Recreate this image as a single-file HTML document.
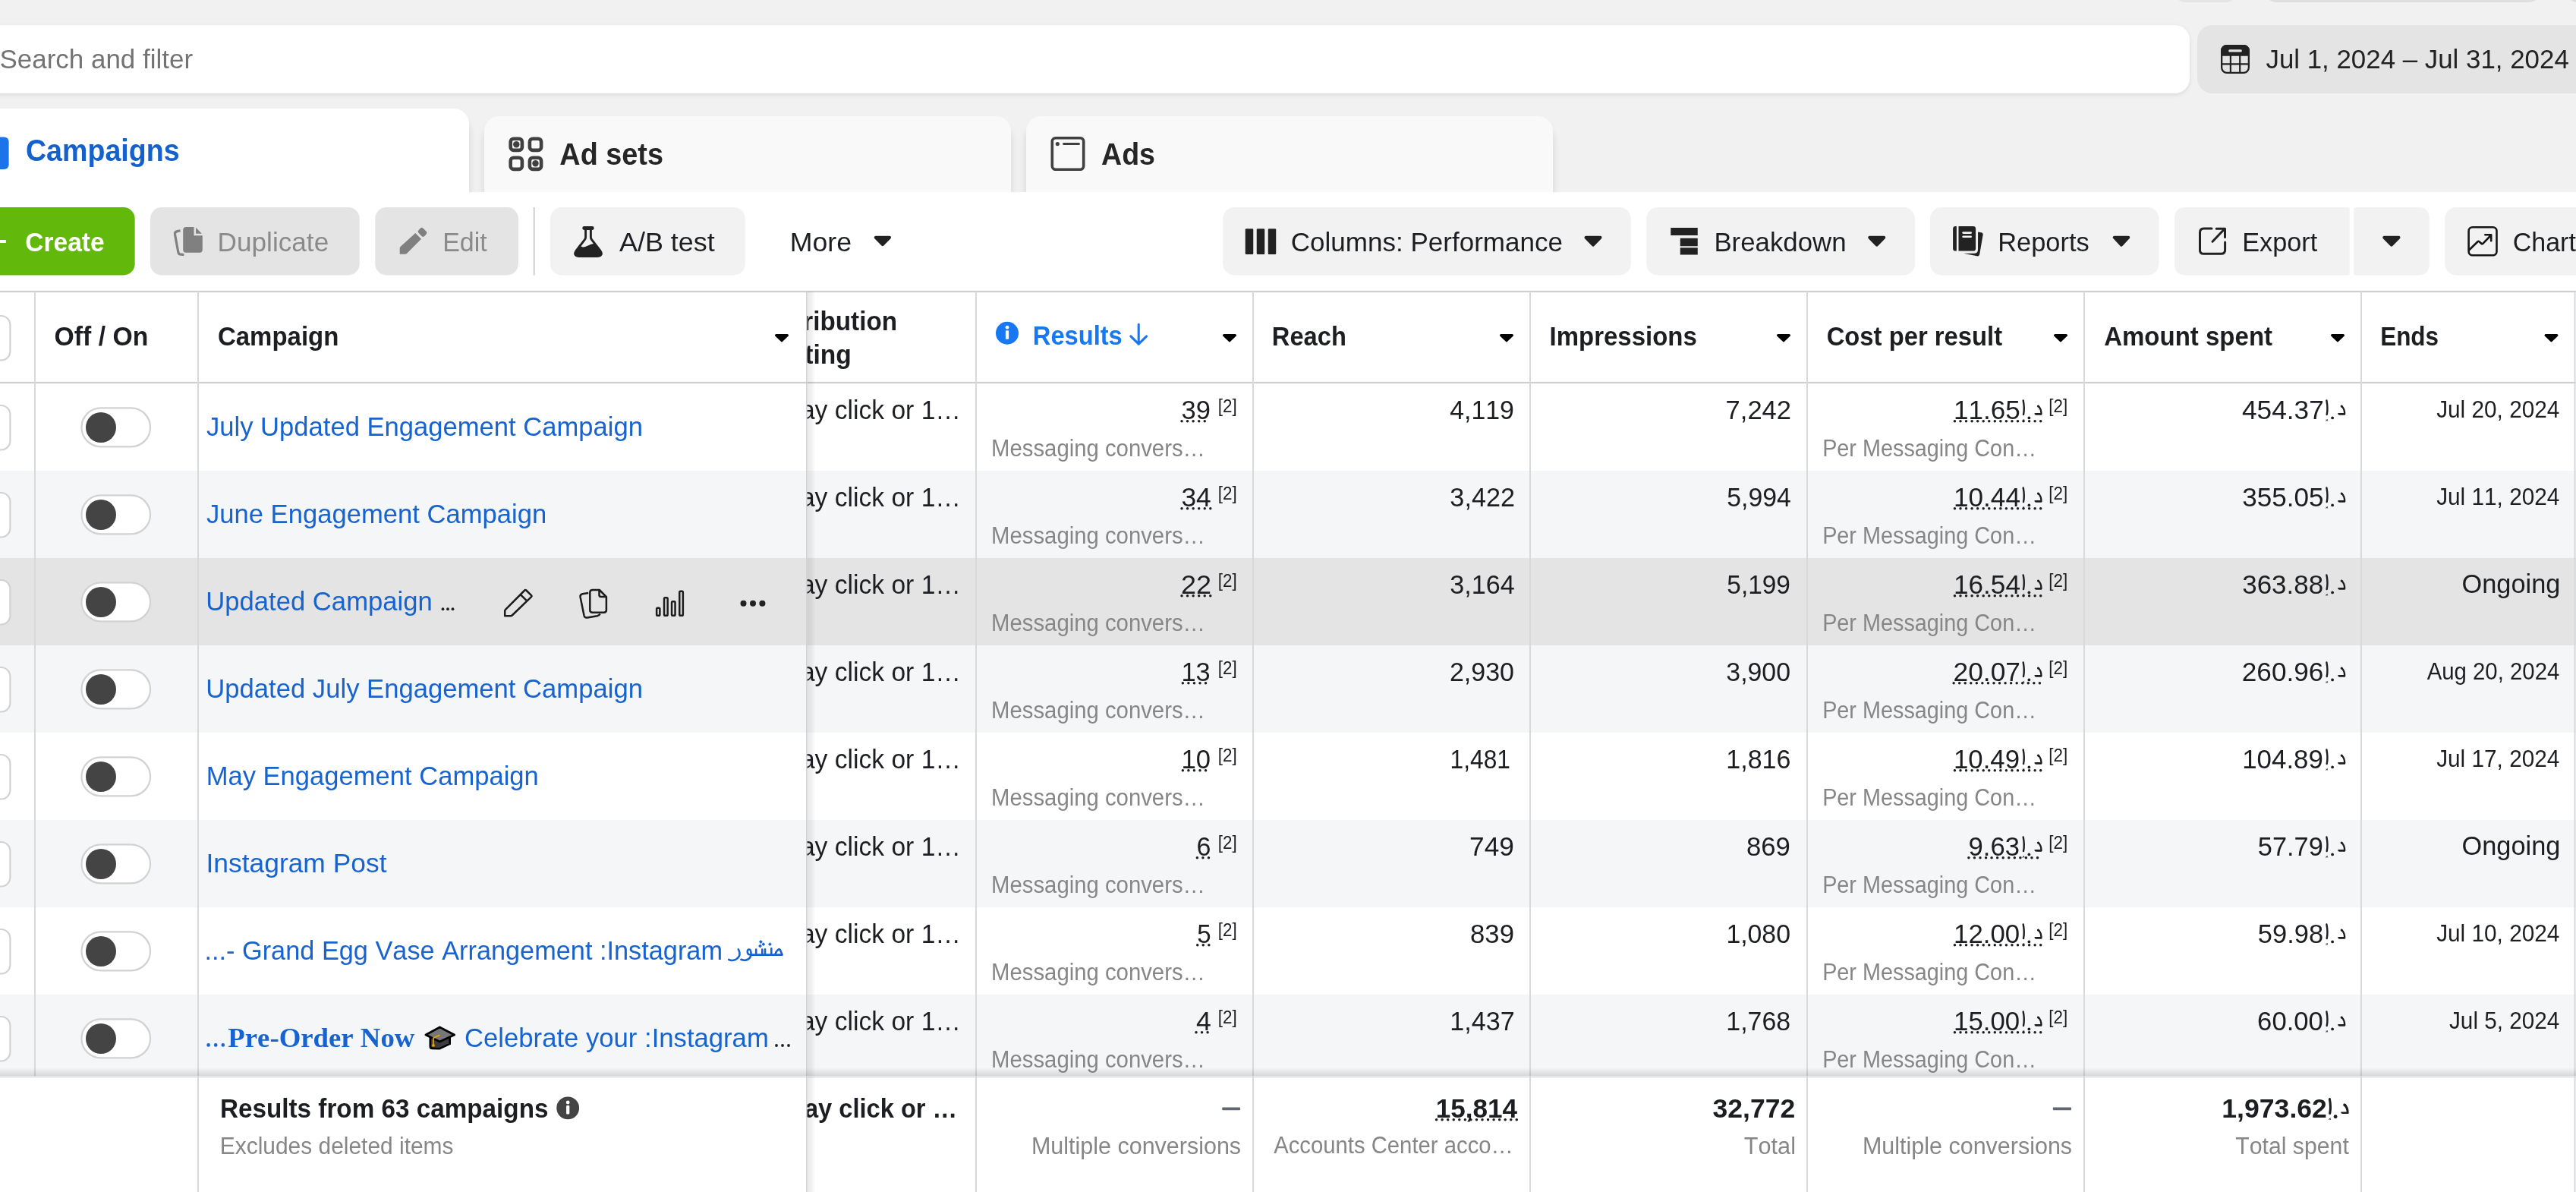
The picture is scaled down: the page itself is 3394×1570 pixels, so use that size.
<!DOCTYPE html>
<html><head><meta charset="utf-8"><title>Ads Manager</title>
<style>
html,body{margin:0;padding:0;background:#f1f1f1;overflow:hidden;}
svg{display:block;will-change:transform;}
text{font-kerning:none;white-space:pre;}
</style></head><body>
<svg width="3394" height="1570" viewBox="0 0 3394 1570">
<rect x="0.00" y="0.00" width="3394.00" height="1570.00" rx="0" fill="#f1f1f1" />
<rect x="2862.20" y="-40.00" width="87.40" height="43.00" rx="18" fill="#e4e4e4" />
<rect x="2982.20" y="-40.00" width="367.00" height="43.00" rx="18" fill="#dedede" />
<rect x="3379.00" y="-40.00" width="60.00" height="43.00" rx="18" fill="#dedede" />
<defs><filter id="sh1" x="-5%" y="-50%" width="110%" height="200%"><feDropShadow dx="0" dy="2" stdDeviation="2.5" flood-color="#000" flood-opacity="0.10"/></filter><filter id="sh2" x="-20%" y="-20%" width="140%" height="160%"><feDropShadow dx="0" dy="12" stdDeviation="5" flood-color="#000" flood-opacity="0.13"/></filter><linearGradient id="frz" x1="0" x2="1" y1="0" y2="0"><stop offset="0" stop-color="#000" stop-opacity="0.09"/><stop offset="0.6" stop-color="#000" stop-opacity="0.05"/><stop offset="1" stop-color="#000" stop-opacity="0"/></linearGradient><linearGradient id="fts" x1="0" x2="0" y1="0" y2="1"><stop offset="0" stop-color="#000" stop-opacity="0"/><stop offset="1" stop-color="#000" stop-opacity="0.13"/></linearGradient></defs>
<rect x="-30.00" y="33.00" width="2915.00" height="90.00" rx="20" fill="#ffffff" filter="url(#sh1)"/>
<text x="-0.59" y="90.00" font-family="Liberation Sans" font-size="35.70" font-weight="normal" fill="#737373" textLength="254.64" lengthAdjust="spacingAndGlyphs" >Search and filter</text>
<rect x="2895.00" y="33.00" width="560.00" height="90.00" rx="20" fill="#e4e4e4" />
<g transform="translate(2926.00,59.00)" >
<path d="M0 7.5 A7.5 7.5 0 0 1 7.5 0 H30.5 A7.5 7.5 0 0 1 38 7.5 V14.8 H0 Z" fill="#222"/>
<rect x="1.15" y="1.15" width="35.7" height="35.7" rx="6.8" fill="none" stroke="#222" stroke-width="2.3"/>
<rect x="10.2" y="6.3" width="17.7" height="3.2" rx="1.6" fill="#e4e4e4"/>
<path d="M12.9 14 V37 M25.2 14 V37 M0.5 25.4 H37.5" stroke="#222" stroke-width="2.2"/>
</g>
<text x="2985.46" y="90.40" font-family="Liberation Sans" font-size="35.70" font-weight="normal" fill="#222222" textLength="399.32" lengthAdjust="spacingAndGlyphs" >Jul 1, 2024 – Jul 31, 2024</text>
<rect x="-76.00" y="143.00" width="694.00" height="140.00" rx="20" fill="#ffffff" filter="url(#sh2)"/>
<rect x="638.00" y="153.00" width="694.00" height="130.00" rx="20" fill="#f9f9f9" filter="url(#sh2)"/>
<rect x="1352.00" y="153.00" width="694.00" height="130.00" rx="20" fill="#f9f9f9" filter="url(#sh2)"/>
<rect x="-33.00" y="180.40" width="44.60" height="42.50" rx="6" fill="#1b74e8" />
<text x="33.96" y="212.20" font-family="Liberation Sans" font-size="40.80" font-weight="bold" fill="#1461cc" textLength="202.59" lengthAdjust="spacingAndGlyphs" >Campaigns</text>
<g transform="translate(670.40,180.40)" >
<g fill="none" stroke="#404040" stroke-width="4.6"><rect x="2.3" y="2.3" width="15.2" height="15.2" rx="4"/><rect x="27.5" y="2.3" width="15.2" height="15.2" rx="4"/><rect x="2.3" y="27.3" width="15.2" height="15.2" rx="4"/><rect x="27.5" y="27.3" width="15.2" height="15.2" rx="4"/></g><circle cx="9.9" cy="9.9" r="4.2" fill="#404040"/><circle cx="35.1" cy="34.9" r="4.2" fill="#404040"/>
</g>
<text x="737.36" y="217.00" font-family="Liberation Sans" font-size="40.80" font-weight="bold" fill="#262626" textLength="136.61" lengthAdjust="spacingAndGlyphs" >Ad sets</text>
<g transform="translate(1384.50,180.00)" >
<rect x="1.8" y="1.8" width="41.4" height="41.4" rx="4.5" fill="none" stroke="#404040" stroke-width="3.6"/><circle cx="8.8" cy="9.6" r="2.6" fill="#404040"/><rect x="15.5" y="8.1" width="23" height="3" rx="1.5" fill="#404040"/>
</g>
<text x="1451.07" y="217.00" font-family="Liberation Sans" font-size="40.80" font-weight="bold" fill="#262626" textLength="70.91" lengthAdjust="spacingAndGlyphs" >Ads</text>
<rect x="0.00" y="253.00" width="3394.00" height="1317.00" rx="0" fill="#ffffff" />
<rect x="-60.00" y="273.00" width="237.70" height="89.50" rx="15" fill="#63b90b" />
<rect x="-2.00" y="316.00" width="9.85" height="4.00" rx="0" fill="#ffffff" />
<text x="33.33" y="330.50" font-family="Liberation Sans" font-size="35.70" font-weight="bold" fill="#ffffff" textLength="104.29" lengthAdjust="spacingAndGlyphs" >Create</text>
<rect x="198.00" y="273.00" width="275.75" height="89.50" rx="15" fill="#e4e4e4" />
<g transform="translate(220.00,290.00)" >
<path d="M21.2 13 A4 4 0 0 1 25.2 9 H35.5 V19.8 A0.5 0.5 0 0 0 36 20.3 H46.8 V38.7 A4 4 0 0 1 42.8 42.7 H25.2 A4 4 0 0 1 21.2 38.7 Z" fill="#808080"/><path d="M38.1 9.7 L45.9 17.8 H38.1 Z" fill="#808080"/><path d="M17.6 13.8 L13.5 14.6 Q10.0 15.4 10.5 18.8 L14.8 42.0 Q15.4 45.4 19 45.2 L22.4 45.6" fill="none" stroke="#808080" stroke-width="3.2" stroke-linejoin="round"/>
</g>
<text x="286.62" y="330.50" font-family="Liberation Sans" font-size="35.70" font-weight="normal" fill="#8a8a8a" textLength="146.58" lengthAdjust="spacingAndGlyphs" >Duplicate</text>
<rect x="494.25" y="273.00" width="188.75" height="89.50" rx="15" fill="#e4e4e4" />
<g transform="translate(520.00,292.00)" >
<path d="M6.7 42.8 V35.2 Q6.7 33.6 8 32.4 L27.3 14.9 L35 22.7 L16.4 41.6 Q15.2 42.8 13.6 42.8 Z" fill="#808080"/><rect x="31.2" y="9.5" width="11" height="8.6" rx="2.6" transform="rotate(45 36.6 13.6)" fill="#808080"/>
</g>
<text x="583.21" y="330.50" font-family="Liberation Sans" font-size="35.70" font-weight="normal" fill="#8a8a8a" textLength="58.53" lengthAdjust="spacingAndGlyphs" >Edit</text>
<rect x="702.75" y="273.00" width="2.00" height="89.50" rx="0" fill="#d0d0d0" />
<rect x="725.00" y="273.00" width="256.75" height="89.50" rx="15" fill="#f2f2f2" />
<g transform="translate(750.00,290.00)" >
<rect x="17.3" y="8.1" width="15.4" height="4.8" rx="2.4" fill="#222"/><path d="M21.6 12 V22.5 Q21.6 24 20.6 25.4 L9 40.5 Q6.5 44 8.5 46 Q9.5 47.5 13 47.5 H37 Q40.5 47.5 41.5 46 Q43.5 44 41 40.5 L29.4 25.4 Q28.4 24 28.4 22.5 V12" fill="none" stroke="#222" stroke-width="2.9" stroke-linejoin="round"/><path d="M13.5 32 Q16 36.5 21 35 Q25 33.5 28 32 Q31 30.8 34 31 L41 40.5 Q43.5 44 41.5 46 Q40.5 47.5 37 47.5 H13 Q9.5 47.5 8.5 46 Q6.5 44 9 40.5 Z" fill="#222"/>
</g>
<text x="815.93" y="330.50" font-family="Liberation Sans" font-size="35.70" font-weight="normal" fill="#1c1e21" textLength="125.91" lengthAdjust="spacingAndGlyphs" >A/B test</text>
<text x="1040.82" y="330.50" font-family="Liberation Sans" font-size="35.70" font-weight="normal" fill="#1c1e21" textLength="81.28" lengthAdjust="spacingAndGlyphs" >More</text>
<path d="M1153.75 312.75 H1172.00 L1162.88 322.17 Z" fill="#222" stroke="#222" stroke-width="4.00" stroke-linejoin="round"/>
<rect x="1611.25" y="273.00" width="537.50" height="89.50" rx="15" fill="#f2f2f2" />
<rect x="1640.75" y="301.25" width="10.50" height="33.75" rx="1.2" fill="#222" />
<rect x="1655.75" y="301.25" width="10.50" height="33.75" rx="1.2" fill="#222" />
<rect x="1670.75" y="301.25" width="10.50" height="33.75" rx="1.2" fill="#222" />
<text x="1700.72" y="330.50" font-family="Liberation Sans" font-size="35.70" font-weight="normal" fill="#1c1e21" textLength="358.22" lengthAdjust="spacingAndGlyphs" >Columns: Performance</text>
<path d="M2089.50 312.75 H2108.50 L2099.00 322.67 Z" fill="#222" stroke="#222" stroke-width="4.00" stroke-linejoin="round"/>
<rect x="2169.25" y="273.00" width="353.75" height="89.50" rx="15" fill="#f2f2f2" />
<rect x="2201.25" y="300.00" width="35.50" height="10.00" rx="0" fill="#222" />
<rect x="2213.75" y="313.75" width="23.00" height="10.50" rx="0" fill="#222" />
<rect x="2213.75" y="326.25" width="23.00" height="9.25" rx="0" fill="#222" />
<text x="2258.39" y="330.50" font-family="Liberation Sans" font-size="35.70" font-weight="normal" fill="#1c1e21" textLength="174.19" lengthAdjust="spacingAndGlyphs" >Breakdown</text>
<path d="M2463.25 312.75 H2482.25 L2472.75 322.67 Z" fill="#222" stroke="#222" stroke-width="4.00" stroke-linejoin="round"/>
<rect x="2543.00" y="273.00" width="301.50" height="89.50" rx="15" fill="#f2f2f2" />
<g transform="translate(2565.00,290.00)" >
<path d="M8.1 11.5 Q8.1 8.1 11.5 8.1 H12.9 V40.6 H11.5 Q8.1 40.6 8.1 37.2 Z" fill="#222"/><path d="M15.5 8.1 H34.7 Q38.1 8.1 38.1 11.5 V37.2 Q38.1 40.6 34.7 40.6 H15.5 Z" fill="#222"/><rect x="20.3" y="15.2" width="12.7" height="2.8" rx="1.4" fill="#f2f2f2"/><rect x="20.3" y="20.5" width="12.7" height="2.6" rx="1.3" fill="#f2f2f2"/><path d="M41.1 15.5 L45.5 16.3 Q48.2 17 47.6 19.6 L43.2 45 Q42.6 47.8 39.8 47.3 L22.2 43.8 L36 43.8 Q41 43.8 41 38.5 Z" fill="#222"/>
</g>
<text x="2632.18" y="330.50" font-family="Liberation Sans" font-size="35.70" font-weight="normal" fill="#1c1e21" textLength="120.57" lengthAdjust="spacingAndGlyphs" >Reports</text>
<path d="M2785.75 312.75 H2804.25 L2795.00 322.67 Z" fill="#222" stroke="#222" stroke-width="4.00" stroke-linejoin="round"/>
<path d="M2880 273 H3092.75 Q3095.75 273 3095.75 276 V359.5 Q3095.75 362.5 3092.75 362.5 H2880 Q2865 362.5 2865 347.5 V288 Q2865 273 2880 273 Z" fill="#f2f2f2"/>
<path d="M3104.25 273 H3185.75 Q3200.75 273 3200.75 288 V347.5 Q3200.75 362.5 3185.75 362.5 H3104.25 Q3101.25 362.5 3101.25 359.5 V276 Q3101.25 273 3104.25 273 Z" fill="#f2f2f2"/>
<g transform="translate(2890.00,292.00)" >
<path d="M24 9.1 H13.6 Q8.5 9.1 8.5 14.2 V37.7 Q8.5 42.3 13.6 42.3 H36.4 Q41.6 42.3 41.6 37.2 V27" fill="none" stroke="#222" stroke-width="3" stroke-linecap="round"/><path d="M25 26.2 L40.5 10 M30.2 9.2 H41.5 V20.6" fill="none" stroke="#222" stroke-width="3" stroke-linecap="round" stroke-linejoin="round"/>
</g>
<text x="2954.19" y="330.50" font-family="Liberation Sans" font-size="35.70" font-weight="normal" fill="#1c1e21" textLength="99.14" lengthAdjust="spacingAndGlyphs" >Export</text>
<path d="M3141.25 312.75 H3160.50 L3150.88 322.67 Z" fill="#222" stroke="#222" stroke-width="4.00" stroke-linejoin="round"/>
<rect x="3221.25" y="273.00" width="260.00" height="89.50" rx="15" fill="#f2f2f2" />
<g transform="translate(3245.00,292.00)" >
<rect x="7.6" y="7.2" width="36.9" height="37.1" rx="5" fill="none" stroke="#161616" stroke-width="2.6"/><path d="M8.5 37 L19.5 26.3 Q20.5 25.4 21.5 26.3 L24.3 28.8 Q25.3 29.7 26.3 28.8 L36.8 18 M29.3 17.2 H37.2 V25.2" fill="none" stroke="#161616" stroke-width="2.6" stroke-linecap="round" stroke-linejoin="round"/>
</g>
<text x="3310.77" y="330.50" font-family="Liberation Sans" font-size="35.70" font-weight="normal" fill="#1c1e21" textLength="83.12" lengthAdjust="spacingAndGlyphs" >Chart</text>
<rect x="0.00" y="505.00" width="3394.00" height="115.00" rx="0" fill="#ffffff" />
<rect x="0.00" y="620.00" width="3394.00" height="115.00" rx="0" fill="#f5f6f7" />
<rect x="0.00" y="735.00" width="3394.00" height="115.00" rx="0" fill="#e4e4e4" />
<rect x="0.00" y="850.00" width="3394.00" height="115.00" rx="0" fill="#f5f6f7" />
<rect x="0.00" y="965.00" width="3394.00" height="115.00" rx="0" fill="#ffffff" />
<rect x="0.00" y="1080.00" width="3394.00" height="115.00" rx="0" fill="#f5f6f7" />
<rect x="0.00" y="1195.00" width="3394.00" height="115.00" rx="0" fill="#ffffff" />
<rect x="0.00" y="1310.00" width="3394.00" height="115.00" rx="0" fill="#f5f6f7" />
<text x="1012.05" y="434.50" font-family="Liberation Sans" font-size="35.70" font-weight="bold" fill="#1c1e21" textLength="170.01" lengthAdjust="spacingAndGlyphs" >Attribution</text>
<text x="1011.70" y="478.75" font-family="Liberation Sans" font-size="35.70" font-weight="bold" fill="#1c1e21" textLength="110.03" lengthAdjust="spacingAndGlyphs" >setting</text>
<circle cx="1327" cy="438.75" r="15" fill="#1877f2"/>
<circle cx="1327" cy="431.2" r="2.4" fill="#fff"/><rect x="1324.9" y="435.3" width="4.2" height="11.5" rx="1" fill="#fff"/>
<text x="1360.81" y="453.90" font-family="Liberation Sans" font-size="35.70" font-weight="bold" fill="#1877f2" textLength="117.99" lengthAdjust="spacingAndGlyphs" >Results</text>
<path d="M1500.2 427.2 V452.8 M1489.8 442.8 L1500.2 453.2 L1510.6 442.8" fill="none" stroke="#1877f2" stroke-width="3.1" stroke-linejoin="round" stroke-linecap="round"/>
<path d="M1612.65 441.65 H1627.35 L1620.00 448.67 Z" fill="#000" stroke="#000" stroke-width="3.30" stroke-linejoin="round"/>
<text x="1675.81" y="454.50" font-family="Liberation Sans" font-size="35.70" font-weight="bold" fill="#1c1e21" textLength="98.05" lengthAdjust="spacingAndGlyphs" >Reach</text>
<path d="M1977.65 441.65 H1992.35 L1985.00 448.67 Z" fill="#000" stroke="#000" stroke-width="3.30" stroke-linejoin="round"/>
<text x="2041.54" y="454.50" font-family="Liberation Sans" font-size="35.70" font-weight="bold" fill="#1c1e21" textLength="194.35" lengthAdjust="spacingAndGlyphs" >Impressions</text>
<path d="M2342.65 441.65 H2357.35 L2350.00 448.67 Z" fill="#000" stroke="#000" stroke-width="3.30" stroke-linejoin="round"/>
<text x="2406.66" y="454.50" font-family="Liberation Sans" font-size="35.70" font-weight="bold" fill="#1c1e21" textLength="231.42" lengthAdjust="spacingAndGlyphs" >Cost per result</text>
<path d="M2707.65 441.65 H2722.35 L2715.00 448.67 Z" fill="#000" stroke="#000" stroke-width="3.30" stroke-linejoin="round"/>
<text x="2772.18" y="454.50" font-family="Liberation Sans" font-size="35.70" font-weight="bold" fill="#1c1e21" textLength="221.89" lengthAdjust="spacingAndGlyphs" >Amount spent</text>
<path d="M3072.65 441.65 H3087.35 L3080.00 448.67 Z" fill="#000" stroke="#000" stroke-width="3.30" stroke-linejoin="round"/>
<text x="3136.15" y="454.50" font-family="Liberation Sans" font-size="35.70" font-weight="bold" fill="#1c1e21" textLength="76.92" lengthAdjust="spacingAndGlyphs" >Ends</text>
<path d="M3354.15 441.65 H3368.85 L3361.50 448.67 Z" fill="#000" stroke="#000" stroke-width="3.30" stroke-linejoin="round"/>
<text x="1006.37" y="551.70" font-family="Liberation Sans" font-size="35.70" font-weight="normal" fill="#1c1e21" textLength="259.59" lengthAdjust="spacingAndGlyphs" >7-day click or 1…</text>
<text x="1556.48" y="551.70" font-family="Liberation Sans" font-size="35.70" font-weight="normal" fill="#1c1e21" textLength="38.36" lengthAdjust="spacingAndGlyphs" >39</text>
<path d="M1555.29 554.80a1.75 1.75 0 1 0 3.50 0a1.75 1.75 0 1 0 -3.50 0M1562.84 554.80a1.75 1.75 0 1 0 3.50 0a1.75 1.75 0 1 0 -3.50 0M1570.39 554.80a1.75 1.75 0 1 0 3.50 0a1.75 1.75 0 1 0 -3.50 0M1577.94 554.80a1.75 1.75 0 1 0 3.50 0a1.75 1.75 0 1 0 -3.50 0M1585.49 554.80a1.75 1.75 0 1 0 3.50 0a1.75 1.75 0 1 0 -3.50 0" fill="#1c1e21"/>
<text x="1604.87" y="543.40" font-family="Liberation Sans" font-size="23.00" font-weight="normal" fill="#1c1e21" textLength="24.93" lengthAdjust="spacingAndGlyphs" >[2]</text>
<text x="1306.10" y="600.50" font-family="Liberation Sans" font-size="30.60" font-weight="normal" fill="#868686" textLength="281.77" lengthAdjust="spacingAndGlyphs" >Messaging convers…</text>
<text x="1910.17" y="551.70" font-family="Liberation Sans" font-size="35.70" font-weight="normal" fill="#1c1e21" textLength="84.74" lengthAdjust="spacingAndGlyphs" >4,119</text>
<text x="2273.59" y="551.70" font-family="Liberation Sans" font-size="35.70" font-weight="normal" fill="#1c1e21" textLength="86.45" lengthAdjust="spacingAndGlyphs" >7,242</text>
<text x="2574.03" y="551.70" font-family="Liberation Sans" font-size="35.70" font-weight="normal" fill="#1c1e21" textLength="87.75" lengthAdjust="spacingAndGlyphs" >11.65</text>
<path d="M2665.70 527.40 Q2667.70 537.70 2666.00 546.10" stroke="#1c1e21" stroke-width="2.40" fill="none" stroke-linecap="round"/>
<path d="M2664.60 554.30 q1.6 -1.2 2.8 -0.2 M2665.00 552.90 q1.2 0.8 2.2 -0.4" stroke="#1c1e21" stroke-width="0.90" fill="none"/>
<circle cx="2673.40" cy="550.40" r="1.90" fill="#1c1e21"/>
<path d="M2685.20 534.70 Q2689.40 538.20 2689.50 545.30" stroke="#1c1e21" stroke-width="2.30" fill="none" stroke-linecap="round"/>
<path d="M2680.40 544.30 Q2680.40 546.70 2682.40 546.70 H2689.80 V544.10 H2682.00 Z" fill="#1c1e21"/>
<circle cx="2685.70" cy="535.30" r="1.50" fill="#1c1e21"/>
<path d="M2573.70 554.80a1.75 1.75 0 1 0 3.50 0a1.75 1.75 0 1 0 -3.50 0M2581.25 554.80a1.75 1.75 0 1 0 3.50 0a1.75 1.75 0 1 0 -3.50 0M2588.80 554.80a1.75 1.75 0 1 0 3.50 0a1.75 1.75 0 1 0 -3.50 0M2596.35 554.80a1.75 1.75 0 1 0 3.50 0a1.75 1.75 0 1 0 -3.50 0M2603.90 554.80a1.75 1.75 0 1 0 3.50 0a1.75 1.75 0 1 0 -3.50 0M2611.45 554.80a1.75 1.75 0 1 0 3.50 0a1.75 1.75 0 1 0 -3.50 0M2619.00 554.80a1.75 1.75 0 1 0 3.50 0a1.75 1.75 0 1 0 -3.50 0M2626.55 554.80a1.75 1.75 0 1 0 3.50 0a1.75 1.75 0 1 0 -3.50 0M2634.10 554.80a1.75 1.75 0 1 0 3.50 0a1.75 1.75 0 1 0 -3.50 0M2641.65 554.80a1.75 1.75 0 1 0 3.50 0a1.75 1.75 0 1 0 -3.50 0M2649.20 554.80a1.75 1.75 0 1 0 3.50 0a1.75 1.75 0 1 0 -3.50 0M2656.75 554.80a1.75 1.75 0 1 0 3.50 0a1.75 1.75 0 1 0 -3.50 0M2664.30 554.80a1.75 1.75 0 1 0 3.50 0a1.75 1.75 0 1 0 -3.50 0M2671.85 554.80a1.75 1.75 0 1 0 3.50 0a1.75 1.75 0 1 0 -3.50 0M2679.40 554.80a1.75 1.75 0 1 0 3.50 0a1.75 1.75 0 1 0 -3.50 0M2686.95 554.80a1.75 1.75 0 1 0 3.50 0a1.75 1.75 0 1 0 -3.50 0" fill="#1c1e21"/>
<text x="2699.37" y="543.40" font-family="Liberation Sans" font-size="23.00" font-weight="normal" fill="#1c1e21" textLength="24.93" lengthAdjust="spacingAndGlyphs" >[2]</text>
<text x="2401.14" y="600.50" font-family="Liberation Sans" font-size="30.60" font-weight="normal" fill="#868686" textLength="281.84" lengthAdjust="spacingAndGlyphs" >Per Messaging Con…</text>
<text x="2954.04" y="551.70" font-family="Liberation Sans" font-size="35.70" font-weight="normal" fill="#1c1e21" textLength="107.73" lengthAdjust="spacingAndGlyphs" >454.37</text>
<path d="M3065.40 527.40 Q3067.40 537.70 3065.70 546.10" stroke="#1c1e21" stroke-width="2.40" fill="none" stroke-linecap="round"/>
<path d="M3064.30 554.30 q1.6 -1.2 2.8 -0.2 M3064.70 552.90 q1.2 0.8 2.2 -0.4" stroke="#1c1e21" stroke-width="0.90" fill="none"/>
<circle cx="3073.10" cy="550.40" r="1.90" fill="#1c1e21"/>
<path d="M3084.90 534.70 Q3089.10 538.20 3089.20 545.30" stroke="#1c1e21" stroke-width="2.30" fill="none" stroke-linecap="round"/>
<path d="M3080.10 544.30 Q3080.10 546.70 3082.10 546.70 H3089.50 V544.10 H3081.70 Z" fill="#1c1e21"/>
<circle cx="3085.40" cy="535.30" r="1.50" fill="#1c1e21"/>
<text x="3210.15" y="549.80" font-family="Liberation Sans" font-size="30.60" font-weight="normal" fill="#1c1e21" textLength="162.22" lengthAdjust="spacingAndGlyphs" >Jul 20, 2024</text>
<text x="1006.37" y="666.70" font-family="Liberation Sans" font-size="35.70" font-weight="normal" fill="#1c1e21" textLength="259.59" lengthAdjust="spacingAndGlyphs" >7-day click or 1…</text>
<text x="1556.44" y="666.70" font-family="Liberation Sans" font-size="35.70" font-weight="normal" fill="#1c1e21" textLength="39.31" lengthAdjust="spacingAndGlyphs" >34</text>
<path d="M1555.29 669.80a1.75 1.75 0 1 0 3.50 0a1.75 1.75 0 1 0 -3.50 0M1562.84 669.80a1.75 1.75 0 1 0 3.50 0a1.75 1.75 0 1 0 -3.50 0M1570.39 669.80a1.75 1.75 0 1 0 3.50 0a1.75 1.75 0 1 0 -3.50 0M1577.94 669.80a1.75 1.75 0 1 0 3.50 0a1.75 1.75 0 1 0 -3.50 0M1585.49 669.80a1.75 1.75 0 1 0 3.50 0a1.75 1.75 0 1 0 -3.50 0M1593.04 669.80a1.75 1.75 0 1 0 3.50 0a1.75 1.75 0 1 0 -3.50 0" fill="#1c1e21"/>
<text x="1604.87" y="658.40" font-family="Liberation Sans" font-size="23.00" font-weight="normal" fill="#1c1e21" textLength="24.93" lengthAdjust="spacingAndGlyphs" >[2]</text>
<text x="1306.10" y="715.50" font-family="Liberation Sans" font-size="30.60" font-weight="normal" fill="#868686" textLength="281.77" lengthAdjust="spacingAndGlyphs" >Messaging convers…</text>
<text x="1910.36" y="666.70" font-family="Liberation Sans" font-size="35.70" font-weight="normal" fill="#1c1e21" textLength="85.67" lengthAdjust="spacingAndGlyphs" >3,422</text>
<text x="2275.31" y="666.70" font-family="Liberation Sans" font-size="35.70" font-weight="normal" fill="#1c1e21" textLength="84.49" lengthAdjust="spacingAndGlyphs" >5,994</text>
<text x="2574.02" y="666.70" font-family="Liberation Sans" font-size="35.70" font-weight="normal" fill="#1c1e21" textLength="87.91" lengthAdjust="spacingAndGlyphs" >10.44</text>
<path d="M2665.70 642.40 Q2667.70 652.70 2666.00 661.10" stroke="#1c1e21" stroke-width="2.40" fill="none" stroke-linecap="round"/>
<path d="M2664.60 669.30 q1.6 -1.2 2.8 -0.2 M2665.00 667.90 q1.2 0.8 2.2 -0.4" stroke="#1c1e21" stroke-width="0.90" fill="none"/>
<circle cx="2673.40" cy="665.40" r="1.90" fill="#1c1e21"/>
<path d="M2685.20 649.70 Q2689.40 653.20 2689.50 660.30" stroke="#1c1e21" stroke-width="2.30" fill="none" stroke-linecap="round"/>
<path d="M2680.40 659.30 Q2680.40 661.70 2682.40 661.70 H2689.80 V659.10 H2682.00 Z" fill="#1c1e21"/>
<circle cx="2685.70" cy="650.30" r="1.50" fill="#1c1e21"/>
<path d="M2573.70 669.80a1.75 1.75 0 1 0 3.50 0a1.75 1.75 0 1 0 -3.50 0M2581.25 669.80a1.75 1.75 0 1 0 3.50 0a1.75 1.75 0 1 0 -3.50 0M2588.80 669.80a1.75 1.75 0 1 0 3.50 0a1.75 1.75 0 1 0 -3.50 0M2596.35 669.80a1.75 1.75 0 1 0 3.50 0a1.75 1.75 0 1 0 -3.50 0M2603.90 669.80a1.75 1.75 0 1 0 3.50 0a1.75 1.75 0 1 0 -3.50 0M2611.45 669.80a1.75 1.75 0 1 0 3.50 0a1.75 1.75 0 1 0 -3.50 0M2619.00 669.80a1.75 1.75 0 1 0 3.50 0a1.75 1.75 0 1 0 -3.50 0M2626.55 669.80a1.75 1.75 0 1 0 3.50 0a1.75 1.75 0 1 0 -3.50 0M2634.10 669.80a1.75 1.75 0 1 0 3.50 0a1.75 1.75 0 1 0 -3.50 0M2641.65 669.80a1.75 1.75 0 1 0 3.50 0a1.75 1.75 0 1 0 -3.50 0M2649.20 669.80a1.75 1.75 0 1 0 3.50 0a1.75 1.75 0 1 0 -3.50 0M2656.75 669.80a1.75 1.75 0 1 0 3.50 0a1.75 1.75 0 1 0 -3.50 0M2664.30 669.80a1.75 1.75 0 1 0 3.50 0a1.75 1.75 0 1 0 -3.50 0M2671.85 669.80a1.75 1.75 0 1 0 3.50 0a1.75 1.75 0 1 0 -3.50 0M2679.40 669.80a1.75 1.75 0 1 0 3.50 0a1.75 1.75 0 1 0 -3.50 0M2686.95 669.80a1.75 1.75 0 1 0 3.50 0a1.75 1.75 0 1 0 -3.50 0" fill="#1c1e21"/>
<text x="2699.37" y="658.40" font-family="Liberation Sans" font-size="23.00" font-weight="normal" fill="#1c1e21" textLength="24.93" lengthAdjust="spacingAndGlyphs" >[2]</text>
<text x="2401.14" y="715.50" font-family="Liberation Sans" font-size="30.60" font-weight="normal" fill="#868686" textLength="281.84" lengthAdjust="spacingAndGlyphs" >Per Messaging Con…</text>
<text x="2954.23" y="666.70" font-family="Liberation Sans" font-size="35.70" font-weight="normal" fill="#1c1e21" textLength="107.38" lengthAdjust="spacingAndGlyphs" >355.05</text>
<path d="M3065.40 642.40 Q3067.40 652.70 3065.70 661.10" stroke="#1c1e21" stroke-width="2.40" fill="none" stroke-linecap="round"/>
<path d="M3064.30 669.30 q1.6 -1.2 2.8 -0.2 M3064.70 667.90 q1.2 0.8 2.2 -0.4" stroke="#1c1e21" stroke-width="0.90" fill="none"/>
<circle cx="3073.10" cy="665.40" r="1.90" fill="#1c1e21"/>
<path d="M3084.90 649.70 Q3089.10 653.20 3089.20 660.30" stroke="#1c1e21" stroke-width="2.30" fill="none" stroke-linecap="round"/>
<path d="M3080.10 659.30 Q3080.10 661.70 3082.10 661.70 H3089.50 V659.10 H3081.70 Z" fill="#1c1e21"/>
<circle cx="3085.40" cy="650.30" r="1.50" fill="#1c1e21"/>
<text x="3210.15" y="664.80" font-family="Liberation Sans" font-size="30.60" font-weight="normal" fill="#1c1e21" textLength="162.22" lengthAdjust="spacingAndGlyphs" >Jul 11, 2024</text>
<text x="1006.37" y="781.70" font-family="Liberation Sans" font-size="35.70" font-weight="normal" fill="#1c1e21" textLength="259.59" lengthAdjust="spacingAndGlyphs" >7-day click or 1…</text>
<text x="1555.96" y="781.70" font-family="Liberation Sans" font-size="35.70" font-weight="normal" fill="#1c1e21" textLength="40.06" lengthAdjust="spacingAndGlyphs" >22</text>
<path d="M1555.27 784.80a1.75 1.75 0 1 0 3.50 0a1.75 1.75 0 1 0 -3.50 0M1562.82 784.80a1.75 1.75 0 1 0 3.50 0a1.75 1.75 0 1 0 -3.50 0M1570.37 784.80a1.75 1.75 0 1 0 3.50 0a1.75 1.75 0 1 0 -3.50 0M1577.92 784.80a1.75 1.75 0 1 0 3.50 0a1.75 1.75 0 1 0 -3.50 0M1585.47 784.80a1.75 1.75 0 1 0 3.50 0a1.75 1.75 0 1 0 -3.50 0M1593.02 784.80a1.75 1.75 0 1 0 3.50 0a1.75 1.75 0 1 0 -3.50 0" fill="#1c1e21"/>
<text x="1604.87" y="773.40" font-family="Liberation Sans" font-size="23.00" font-weight="normal" fill="#1c1e21" textLength="24.93" lengthAdjust="spacingAndGlyphs" >[2]</text>
<text x="1306.10" y="830.50" font-family="Liberation Sans" font-size="30.60" font-weight="normal" fill="#868686" textLength="281.77" lengthAdjust="spacingAndGlyphs" >Messaging convers…</text>
<text x="1910.36" y="781.70" font-family="Liberation Sans" font-size="35.70" font-weight="normal" fill="#1c1e21" textLength="85.46" lengthAdjust="spacingAndGlyphs" >3,164</text>
<text x="2275.33" y="781.70" font-family="Liberation Sans" font-size="35.70" font-weight="normal" fill="#1c1e21" textLength="83.55" lengthAdjust="spacingAndGlyphs" >5,199</text>
<text x="2574.02" y="781.70" font-family="Liberation Sans" font-size="35.70" font-weight="normal" fill="#1c1e21" textLength="87.91" lengthAdjust="spacingAndGlyphs" >16.54</text>
<path d="M2665.70 757.40 Q2667.70 767.70 2666.00 776.10" stroke="#1c1e21" stroke-width="2.40" fill="none" stroke-linecap="round"/>
<path d="M2664.60 784.30 q1.6 -1.2 2.8 -0.2 M2665.00 782.90 q1.2 0.8 2.2 -0.4" stroke="#1c1e21" stroke-width="0.90" fill="none"/>
<circle cx="2673.40" cy="780.40" r="1.90" fill="#1c1e21"/>
<path d="M2685.20 764.70 Q2689.40 768.20 2689.50 775.30" stroke="#1c1e21" stroke-width="2.30" fill="none" stroke-linecap="round"/>
<path d="M2680.40 774.30 Q2680.40 776.70 2682.40 776.70 H2689.80 V774.10 H2682.00 Z" fill="#1c1e21"/>
<circle cx="2685.70" cy="765.30" r="1.50" fill="#1c1e21"/>
<path d="M2573.70 784.80a1.75 1.75 0 1 0 3.50 0a1.75 1.75 0 1 0 -3.50 0M2581.25 784.80a1.75 1.75 0 1 0 3.50 0a1.75 1.75 0 1 0 -3.50 0M2588.80 784.80a1.75 1.75 0 1 0 3.50 0a1.75 1.75 0 1 0 -3.50 0M2596.35 784.80a1.75 1.75 0 1 0 3.50 0a1.75 1.75 0 1 0 -3.50 0M2603.90 784.80a1.75 1.75 0 1 0 3.50 0a1.75 1.75 0 1 0 -3.50 0M2611.45 784.80a1.75 1.75 0 1 0 3.50 0a1.75 1.75 0 1 0 -3.50 0M2619.00 784.80a1.75 1.75 0 1 0 3.50 0a1.75 1.75 0 1 0 -3.50 0M2626.55 784.80a1.75 1.75 0 1 0 3.50 0a1.75 1.75 0 1 0 -3.50 0M2634.10 784.80a1.75 1.75 0 1 0 3.50 0a1.75 1.75 0 1 0 -3.50 0M2641.65 784.80a1.75 1.75 0 1 0 3.50 0a1.75 1.75 0 1 0 -3.50 0M2649.20 784.80a1.75 1.75 0 1 0 3.50 0a1.75 1.75 0 1 0 -3.50 0M2656.75 784.80a1.75 1.75 0 1 0 3.50 0a1.75 1.75 0 1 0 -3.50 0M2664.30 784.80a1.75 1.75 0 1 0 3.50 0a1.75 1.75 0 1 0 -3.50 0M2671.85 784.80a1.75 1.75 0 1 0 3.50 0a1.75 1.75 0 1 0 -3.50 0M2679.40 784.80a1.75 1.75 0 1 0 3.50 0a1.75 1.75 0 1 0 -3.50 0M2686.95 784.80a1.75 1.75 0 1 0 3.50 0a1.75 1.75 0 1 0 -3.50 0" fill="#1c1e21"/>
<text x="2699.37" y="773.40" font-family="Liberation Sans" font-size="23.00" font-weight="normal" fill="#1c1e21" textLength="24.93" lengthAdjust="spacingAndGlyphs" >[2]</text>
<text x="2401.14" y="830.50" font-family="Liberation Sans" font-size="30.60" font-weight="normal" fill="#868686" textLength="281.84" lengthAdjust="spacingAndGlyphs" >Per Messaging Con…</text>
<text x="2954.23" y="781.70" font-family="Liberation Sans" font-size="35.70" font-weight="normal" fill="#1c1e21" textLength="106.89" lengthAdjust="spacingAndGlyphs" >363.88</text>
<path d="M3065.40 757.40 Q3067.40 767.70 3065.70 776.10" stroke="#1c1e21" stroke-width="2.40" fill="none" stroke-linecap="round"/>
<path d="M3064.30 784.30 q1.6 -1.2 2.8 -0.2 M3064.70 782.90 q1.2 0.8 2.2 -0.4" stroke="#1c1e21" stroke-width="0.90" fill="none"/>
<circle cx="3073.10" cy="780.40" r="1.90" fill="#1c1e21"/>
<path d="M3084.90 764.70 Q3089.10 768.20 3089.20 775.30" stroke="#1c1e21" stroke-width="2.30" fill="none" stroke-linecap="round"/>
<path d="M3080.10 774.30 Q3080.10 776.70 3082.10 776.70 H3089.50 V774.10 H3081.70 Z" fill="#1c1e21"/>
<circle cx="3085.40" cy="765.30" r="1.50" fill="#1c1e21"/>
<text x="3243.48" y="781.30" font-family="Liberation Sans" font-size="35.70" font-weight="normal" fill="#1c1e21" textLength="129.93" lengthAdjust="spacingAndGlyphs" >Ongoing</text>
<text x="1006.37" y="896.70" font-family="Liberation Sans" font-size="35.70" font-weight="normal" fill="#1c1e21" textLength="259.59" lengthAdjust="spacingAndGlyphs" >7-day click or 1…</text>
<text x="1556.47" y="896.70" font-family="Liberation Sans" font-size="35.70" font-weight="normal" fill="#1c1e21" textLength="38.28" lengthAdjust="spacingAndGlyphs" >13</text>
<path d="M1556.59 899.80a1.75 1.75 0 1 0 3.50 0a1.75 1.75 0 1 0 -3.50 0M1564.14 899.80a1.75 1.75 0 1 0 3.50 0a1.75 1.75 0 1 0 -3.50 0M1571.69 899.80a1.75 1.75 0 1 0 3.50 0a1.75 1.75 0 1 0 -3.50 0M1579.24 899.80a1.75 1.75 0 1 0 3.50 0a1.75 1.75 0 1 0 -3.50 0M1586.79 899.80a1.75 1.75 0 1 0 3.50 0a1.75 1.75 0 1 0 -3.50 0" fill="#1c1e21"/>
<text x="1604.87" y="888.40" font-family="Liberation Sans" font-size="23.00" font-weight="normal" fill="#1c1e21" textLength="24.93" lengthAdjust="spacingAndGlyphs" >[2]</text>
<text x="1306.10" y="945.50" font-family="Liberation Sans" font-size="30.60" font-weight="normal" fill="#868686" textLength="281.77" lengthAdjust="spacingAndGlyphs" >Messaging convers…</text>
<text x="1909.94" y="896.70" font-family="Liberation Sans" font-size="35.70" font-weight="normal" fill="#1c1e21" textLength="85.02" lengthAdjust="spacingAndGlyphs" >2,930</text>
<text x="2274.37" y="896.70" font-family="Liberation Sans" font-size="35.70" font-weight="normal" fill="#1c1e21" textLength="84.57" lengthAdjust="spacingAndGlyphs" >3,900</text>
<text x="2573.61" y="896.70" font-family="Liberation Sans" font-size="35.70" font-weight="normal" fill="#1c1e21" textLength="88.33" lengthAdjust="spacingAndGlyphs" >20.07</text>
<path d="M2665.70 872.40 Q2667.70 882.70 2666.00 891.10" stroke="#1c1e21" stroke-width="2.40" fill="none" stroke-linecap="round"/>
<path d="M2664.60 899.30 q1.6 -1.2 2.8 -0.2 M2665.00 897.90 q1.2 0.8 2.2 -0.4" stroke="#1c1e21" stroke-width="0.90" fill="none"/>
<circle cx="2673.40" cy="895.40" r="1.90" fill="#1c1e21"/>
<path d="M2685.20 879.70 Q2689.40 883.20 2689.50 890.30" stroke="#1c1e21" stroke-width="2.30" fill="none" stroke-linecap="round"/>
<path d="M2680.40 889.30 Q2680.40 891.70 2682.40 891.70 H2689.80 V889.10 H2682.00 Z" fill="#1c1e21"/>
<circle cx="2685.70" cy="880.30" r="1.50" fill="#1c1e21"/>
<path d="M2572.38 899.80a1.75 1.75 0 1 0 3.50 0a1.75 1.75 0 1 0 -3.50 0M2579.93 899.80a1.75 1.75 0 1 0 3.50 0a1.75 1.75 0 1 0 -3.50 0M2587.48 899.80a1.75 1.75 0 1 0 3.50 0a1.75 1.75 0 1 0 -3.50 0M2595.03 899.80a1.75 1.75 0 1 0 3.50 0a1.75 1.75 0 1 0 -3.50 0M2602.58 899.80a1.75 1.75 0 1 0 3.50 0a1.75 1.75 0 1 0 -3.50 0M2610.13 899.80a1.75 1.75 0 1 0 3.50 0a1.75 1.75 0 1 0 -3.50 0M2617.68 899.80a1.75 1.75 0 1 0 3.50 0a1.75 1.75 0 1 0 -3.50 0M2625.23 899.80a1.75 1.75 0 1 0 3.50 0a1.75 1.75 0 1 0 -3.50 0M2632.78 899.80a1.75 1.75 0 1 0 3.50 0a1.75 1.75 0 1 0 -3.50 0M2640.33 899.80a1.75 1.75 0 1 0 3.50 0a1.75 1.75 0 1 0 -3.50 0M2647.88 899.80a1.75 1.75 0 1 0 3.50 0a1.75 1.75 0 1 0 -3.50 0M2655.43 899.80a1.75 1.75 0 1 0 3.50 0a1.75 1.75 0 1 0 -3.50 0M2662.98 899.80a1.75 1.75 0 1 0 3.50 0a1.75 1.75 0 1 0 -3.50 0M2670.53 899.80a1.75 1.75 0 1 0 3.50 0a1.75 1.75 0 1 0 -3.50 0M2678.08 899.80a1.75 1.75 0 1 0 3.50 0a1.75 1.75 0 1 0 -3.50 0M2685.63 899.80a1.75 1.75 0 1 0 3.50 0a1.75 1.75 0 1 0 -3.50 0" fill="#1c1e21"/>
<text x="2699.37" y="888.40" font-family="Liberation Sans" font-size="23.00" font-weight="normal" fill="#1c1e21" textLength="24.93" lengthAdjust="spacingAndGlyphs" >[2]</text>
<text x="2401.14" y="945.50" font-family="Liberation Sans" font-size="30.60" font-weight="normal" fill="#868686" textLength="281.84" lengthAdjust="spacingAndGlyphs" >Per Messaging Con…</text>
<text x="2953.78" y="896.70" font-family="Liberation Sans" font-size="35.70" font-weight="normal" fill="#1c1e21" textLength="107.62" lengthAdjust="spacingAndGlyphs" >260.96</text>
<path d="M3065.40 872.40 Q3067.40 882.70 3065.70 891.10" stroke="#1c1e21" stroke-width="2.40" fill="none" stroke-linecap="round"/>
<path d="M3064.30 899.30 q1.6 -1.2 2.8 -0.2 M3064.70 897.90 q1.2 0.8 2.2 -0.4" stroke="#1c1e21" stroke-width="0.90" fill="none"/>
<circle cx="3073.10" cy="895.40" r="1.90" fill="#1c1e21"/>
<path d="M3084.90 879.70 Q3089.10 883.20 3089.20 890.30" stroke="#1c1e21" stroke-width="2.30" fill="none" stroke-linecap="round"/>
<path d="M3080.10 889.30 Q3080.10 891.70 3082.10 891.70 H3089.50 V889.10 H3081.70 Z" fill="#1c1e21"/>
<circle cx="3085.40" cy="880.30" r="1.50" fill="#1c1e21"/>
<text x="3197.64" y="894.80" font-family="Liberation Sans" font-size="30.60" font-weight="normal" fill="#1c1e21" textLength="174.72" lengthAdjust="spacingAndGlyphs" >Aug 20, 2024</text>
<text x="1006.37" y="1011.70" font-family="Liberation Sans" font-size="35.70" font-weight="normal" fill="#1c1e21" textLength="259.59" lengthAdjust="spacingAndGlyphs" >7-day click or 1…</text>
<text x="1556.46" y="1011.70" font-family="Liberation Sans" font-size="35.70" font-weight="normal" fill="#1c1e21" textLength="38.42" lengthAdjust="spacingAndGlyphs" >10</text>
<path d="M1556.59 1014.80a1.75 1.75 0 1 0 3.50 0a1.75 1.75 0 1 0 -3.50 0M1564.14 1014.80a1.75 1.75 0 1 0 3.50 0a1.75 1.75 0 1 0 -3.50 0M1571.69 1014.80a1.75 1.75 0 1 0 3.50 0a1.75 1.75 0 1 0 -3.50 0M1579.24 1014.80a1.75 1.75 0 1 0 3.50 0a1.75 1.75 0 1 0 -3.50 0M1586.79 1014.80a1.75 1.75 0 1 0 3.50 0a1.75 1.75 0 1 0 -3.50 0" fill="#1c1e21"/>
<text x="1604.87" y="1003.40" font-family="Liberation Sans" font-size="23.00" font-weight="normal" fill="#1c1e21" textLength="24.93" lengthAdjust="spacingAndGlyphs" >[2]</text>
<text x="1306.10" y="1060.50" font-family="Liberation Sans" font-size="30.60" font-weight="normal" fill="#868686" textLength="281.77" lengthAdjust="spacingAndGlyphs" >Messaging convers…</text>
<text x="1910.54" y="1011.70" font-family="Liberation Sans" font-size="35.70" font-weight="normal" fill="#1c1e21" textLength="79.40" lengthAdjust="spacingAndGlyphs" >1,481</text>
<text x="2274.36" y="1011.70" font-family="Liberation Sans" font-size="35.70" font-weight="normal" fill="#1c1e21" textLength="85.05" lengthAdjust="spacingAndGlyphs" >1,816</text>
<text x="2574.05" y="1011.70" font-family="Liberation Sans" font-size="35.70" font-weight="normal" fill="#1c1e21" textLength="86.97" lengthAdjust="spacingAndGlyphs" >10.49</text>
<path d="M2665.70 987.40 Q2667.70 997.70 2666.00 1006.10" stroke="#1c1e21" stroke-width="2.40" fill="none" stroke-linecap="round"/>
<path d="M2664.60 1014.30 q1.6 -1.2 2.8 -0.2 M2665.00 1012.90 q1.2 0.8 2.2 -0.4" stroke="#1c1e21" stroke-width="0.90" fill="none"/>
<circle cx="2673.40" cy="1010.40" r="1.90" fill="#1c1e21"/>
<path d="M2685.20 994.70 Q2689.40 998.20 2689.50 1005.30" stroke="#1c1e21" stroke-width="2.30" fill="none" stroke-linecap="round"/>
<path d="M2680.40 1004.30 Q2680.40 1006.70 2682.40 1006.70 H2689.80 V1004.10 H2682.00 Z" fill="#1c1e21"/>
<circle cx="2685.70" cy="995.30" r="1.50" fill="#1c1e21"/>
<path d="M2573.70 1014.80a1.75 1.75 0 1 0 3.50 0a1.75 1.75 0 1 0 -3.50 0M2581.25 1014.80a1.75 1.75 0 1 0 3.50 0a1.75 1.75 0 1 0 -3.50 0M2588.80 1014.80a1.75 1.75 0 1 0 3.50 0a1.75 1.75 0 1 0 -3.50 0M2596.35 1014.80a1.75 1.75 0 1 0 3.50 0a1.75 1.75 0 1 0 -3.50 0M2603.90 1014.80a1.75 1.75 0 1 0 3.50 0a1.75 1.75 0 1 0 -3.50 0M2611.45 1014.80a1.75 1.75 0 1 0 3.50 0a1.75 1.75 0 1 0 -3.50 0M2619.00 1014.80a1.75 1.75 0 1 0 3.50 0a1.75 1.75 0 1 0 -3.50 0M2626.55 1014.80a1.75 1.75 0 1 0 3.50 0a1.75 1.75 0 1 0 -3.50 0M2634.10 1014.80a1.75 1.75 0 1 0 3.50 0a1.75 1.75 0 1 0 -3.50 0M2641.65 1014.80a1.75 1.75 0 1 0 3.50 0a1.75 1.75 0 1 0 -3.50 0M2649.20 1014.80a1.75 1.75 0 1 0 3.50 0a1.75 1.75 0 1 0 -3.50 0M2656.75 1014.80a1.75 1.75 0 1 0 3.50 0a1.75 1.75 0 1 0 -3.50 0M2664.30 1014.80a1.75 1.75 0 1 0 3.50 0a1.75 1.75 0 1 0 -3.50 0M2671.85 1014.80a1.75 1.75 0 1 0 3.50 0a1.75 1.75 0 1 0 -3.50 0M2679.40 1014.80a1.75 1.75 0 1 0 3.50 0a1.75 1.75 0 1 0 -3.50 0M2686.95 1014.80a1.75 1.75 0 1 0 3.50 0a1.75 1.75 0 1 0 -3.50 0" fill="#1c1e21"/>
<text x="2699.37" y="1003.40" font-family="Liberation Sans" font-size="23.00" font-weight="normal" fill="#1c1e21" textLength="24.93" lengthAdjust="spacingAndGlyphs" >[2]</text>
<text x="2401.14" y="1060.50" font-family="Liberation Sans" font-size="30.60" font-weight="normal" fill="#868686" textLength="281.84" lengthAdjust="spacingAndGlyphs" >Per Messaging Con…</text>
<text x="2954.21" y="1011.70" font-family="Liberation Sans" font-size="35.70" font-weight="normal" fill="#1c1e21" textLength="106.66" lengthAdjust="spacingAndGlyphs" >104.89</text>
<path d="M3065.40 987.40 Q3067.40 997.70 3065.70 1006.10" stroke="#1c1e21" stroke-width="2.40" fill="none" stroke-linecap="round"/>
<path d="M3064.30 1014.30 q1.6 -1.2 2.8 -0.2 M3064.70 1012.90 q1.2 0.8 2.2 -0.4" stroke="#1c1e21" stroke-width="0.90" fill="none"/>
<circle cx="3073.10" cy="1010.40" r="1.90" fill="#1c1e21"/>
<path d="M3084.90 994.70 Q3089.10 998.20 3089.20 1005.30" stroke="#1c1e21" stroke-width="2.30" fill="none" stroke-linecap="round"/>
<path d="M3080.10 1004.30 Q3080.10 1006.70 3082.10 1006.70 H3089.50 V1004.10 H3081.70 Z" fill="#1c1e21"/>
<circle cx="3085.40" cy="995.30" r="1.50" fill="#1c1e21"/>
<text x="3210.15" y="1009.80" font-family="Liberation Sans" font-size="30.60" font-weight="normal" fill="#1c1e21" textLength="162.22" lengthAdjust="spacingAndGlyphs" >Jul 17, 2024</text>
<text x="1006.37" y="1126.70" font-family="Liberation Sans" font-size="35.70" font-weight="normal" fill="#1c1e21" textLength="259.59" lengthAdjust="spacingAndGlyphs" >7-day click or 1…</text>
<text x="1576.38" y="1126.70" font-family="Liberation Sans" font-size="35.70" font-weight="normal" fill="#1c1e21" textLength="18.95" lengthAdjust="spacingAndGlyphs" >6</text>
<path d="M1575.61 1129.80a1.75 1.75 0 1 0 3.50 0a1.75 1.75 0 1 0 -3.50 0M1583.16 1129.80a1.75 1.75 0 1 0 3.50 0a1.75 1.75 0 1 0 -3.50 0M1590.71 1129.80a1.75 1.75 0 1 0 3.50 0a1.75 1.75 0 1 0 -3.50 0" fill="#1c1e21"/>
<text x="1604.87" y="1118.40" font-family="Liberation Sans" font-size="23.00" font-weight="normal" fill="#1c1e21" textLength="24.93" lengthAdjust="spacingAndGlyphs" >[2]</text>
<text x="1306.10" y="1175.50" font-family="Liberation Sans" font-size="30.60" font-weight="normal" fill="#868686" textLength="281.77" lengthAdjust="spacingAndGlyphs" >Messaging convers…</text>
<text x="1936.12" y="1126.70" font-family="Liberation Sans" font-size="35.70" font-weight="normal" fill="#1c1e21" textLength="58.85" lengthAdjust="spacingAndGlyphs" >749</text>
<text x="2301.01" y="1126.70" font-family="Liberation Sans" font-size="35.70" font-weight="normal" fill="#1c1e21" textLength="57.93" lengthAdjust="spacingAndGlyphs" >869</text>
<text x="2593.53" y="1126.70" font-family="Liberation Sans" font-size="35.70" font-weight="normal" fill="#1c1e21" textLength="67.40" lengthAdjust="spacingAndGlyphs" >9.63</text>
<path d="M2665.70 1102.40 Q2667.70 1112.70 2666.00 1121.10" stroke="#1c1e21" stroke-width="2.40" fill="none" stroke-linecap="round"/>
<path d="M2664.60 1129.30 q1.6 -1.2 2.8 -0.2 M2665.00 1127.90 q1.2 0.8 2.2 -0.4" stroke="#1c1e21" stroke-width="0.90" fill="none"/>
<circle cx="2673.40" cy="1125.40" r="1.90" fill="#1c1e21"/>
<path d="M2685.20 1109.70 Q2689.40 1113.20 2689.50 1120.30" stroke="#1c1e21" stroke-width="2.30" fill="none" stroke-linecap="round"/>
<path d="M2680.40 1119.30 Q2680.40 1121.70 2682.40 1121.70 H2689.80 V1119.10 H2682.00 Z" fill="#1c1e21"/>
<circle cx="2685.70" cy="1110.30" r="1.50" fill="#1c1e21"/>
<path d="M2592.15 1129.80a1.75 1.75 0 1 0 3.50 0a1.75 1.75 0 1 0 -3.50 0M2599.70 1129.80a1.75 1.75 0 1 0 3.50 0a1.75 1.75 0 1 0 -3.50 0M2607.25 1129.80a1.75 1.75 0 1 0 3.50 0a1.75 1.75 0 1 0 -3.50 0M2614.80 1129.80a1.75 1.75 0 1 0 3.50 0a1.75 1.75 0 1 0 -3.50 0M2622.35 1129.80a1.75 1.75 0 1 0 3.50 0a1.75 1.75 0 1 0 -3.50 0M2629.90 1129.80a1.75 1.75 0 1 0 3.50 0a1.75 1.75 0 1 0 -3.50 0M2637.45 1129.80a1.75 1.75 0 1 0 3.50 0a1.75 1.75 0 1 0 -3.50 0M2645.00 1129.80a1.75 1.75 0 1 0 3.50 0a1.75 1.75 0 1 0 -3.50 0M2652.55 1129.80a1.75 1.75 0 1 0 3.50 0a1.75 1.75 0 1 0 -3.50 0M2660.10 1129.80a1.75 1.75 0 1 0 3.50 0a1.75 1.75 0 1 0 -3.50 0M2667.65 1129.80a1.75 1.75 0 1 0 3.50 0a1.75 1.75 0 1 0 -3.50 0M2675.20 1129.80a1.75 1.75 0 1 0 3.50 0a1.75 1.75 0 1 0 -3.50 0M2682.75 1129.80a1.75 1.75 0 1 0 3.50 0a1.75 1.75 0 1 0 -3.50 0" fill="#1c1e21"/>
<text x="2699.37" y="1118.40" font-family="Liberation Sans" font-size="23.00" font-weight="normal" fill="#1c1e21" textLength="24.93" lengthAdjust="spacingAndGlyphs" >[2]</text>
<text x="2401.14" y="1175.50" font-family="Liberation Sans" font-size="30.60" font-weight="normal" fill="#868686" textLength="281.84" lengthAdjust="spacingAndGlyphs" >Per Messaging Con…</text>
<text x="2974.87" y="1126.70" font-family="Liberation Sans" font-size="35.70" font-weight="normal" fill="#1c1e21" textLength="85.97" lengthAdjust="spacingAndGlyphs" >57.79</text>
<path d="M3065.40 1102.40 Q3067.40 1112.70 3065.70 1121.10" stroke="#1c1e21" stroke-width="2.40" fill="none" stroke-linecap="round"/>
<path d="M3064.30 1129.30 q1.6 -1.2 2.8 -0.2 M3064.70 1127.90 q1.2 0.8 2.2 -0.4" stroke="#1c1e21" stroke-width="0.90" fill="none"/>
<circle cx="3073.10" cy="1125.40" r="1.90" fill="#1c1e21"/>
<path d="M3084.90 1109.70 Q3089.10 1113.20 3089.20 1120.30" stroke="#1c1e21" stroke-width="2.30" fill="none" stroke-linecap="round"/>
<path d="M3080.10 1119.30 Q3080.10 1121.70 3082.10 1121.70 H3089.50 V1119.10 H3081.70 Z" fill="#1c1e21"/>
<circle cx="3085.40" cy="1110.30" r="1.50" fill="#1c1e21"/>
<text x="3243.48" y="1126.30" font-family="Liberation Sans" font-size="35.70" font-weight="normal" fill="#1c1e21" textLength="129.93" lengthAdjust="spacingAndGlyphs" >Ongoing</text>
<text x="1006.37" y="1241.70" font-family="Liberation Sans" font-size="35.70" font-weight="normal" fill="#1c1e21" textLength="259.59" lengthAdjust="spacingAndGlyphs" >7-day click or 1…</text>
<text x="1577.15" y="1241.70" font-family="Liberation Sans" font-size="35.70" font-weight="normal" fill="#1c1e21" textLength="18.36" lengthAdjust="spacingAndGlyphs" >5</text>
<path d="M1575.97 1244.80a1.75 1.75 0 1 0 3.50 0a1.75 1.75 0 1 0 -3.50 0M1583.52 1244.80a1.75 1.75 0 1 0 3.50 0a1.75 1.75 0 1 0 -3.50 0M1591.07 1244.80a1.75 1.75 0 1 0 3.50 0a1.75 1.75 0 1 0 -3.50 0" fill="#1c1e21"/>
<text x="1604.87" y="1233.40" font-family="Liberation Sans" font-size="23.00" font-weight="normal" fill="#1c1e21" textLength="24.93" lengthAdjust="spacingAndGlyphs" >[2]</text>
<text x="1306.10" y="1290.50" font-family="Liberation Sans" font-size="30.60" font-weight="normal" fill="#868686" textLength="281.77" lengthAdjust="spacingAndGlyphs" >Messaging convers…</text>
<text x="1937.02" y="1241.70" font-family="Liberation Sans" font-size="35.70" font-weight="normal" fill="#1c1e21" textLength="57.93" lengthAdjust="spacingAndGlyphs" >839</text>
<text x="2274.38" y="1241.70" font-family="Liberation Sans" font-size="35.70" font-weight="normal" fill="#1c1e21" textLength="84.56" lengthAdjust="spacingAndGlyphs" >1,080</text>
<text x="2574.05" y="1241.70" font-family="Liberation Sans" font-size="35.70" font-weight="normal" fill="#1c1e21" textLength="87.01" lengthAdjust="spacingAndGlyphs" >12.00</text>
<path d="M2665.70 1217.40 Q2667.70 1227.70 2666.00 1236.10" stroke="#1c1e21" stroke-width="2.40" fill="none" stroke-linecap="round"/>
<path d="M2664.60 1244.30 q1.6 -1.2 2.8 -0.2 M2665.00 1242.90 q1.2 0.8 2.2 -0.4" stroke="#1c1e21" stroke-width="0.90" fill="none"/>
<circle cx="2673.40" cy="1240.40" r="1.90" fill="#1c1e21"/>
<path d="M2685.20 1224.70 Q2689.40 1228.20 2689.50 1235.30" stroke="#1c1e21" stroke-width="2.30" fill="none" stroke-linecap="round"/>
<path d="M2680.40 1234.30 Q2680.40 1236.70 2682.40 1236.70 H2689.80 V1234.10 H2682.00 Z" fill="#1c1e21"/>
<circle cx="2685.70" cy="1225.30" r="1.50" fill="#1c1e21"/>
<path d="M2573.70 1244.80a1.75 1.75 0 1 0 3.50 0a1.75 1.75 0 1 0 -3.50 0M2581.25 1244.80a1.75 1.75 0 1 0 3.50 0a1.75 1.75 0 1 0 -3.50 0M2588.80 1244.80a1.75 1.75 0 1 0 3.50 0a1.75 1.75 0 1 0 -3.50 0M2596.35 1244.80a1.75 1.75 0 1 0 3.50 0a1.75 1.75 0 1 0 -3.50 0M2603.90 1244.80a1.75 1.75 0 1 0 3.50 0a1.75 1.75 0 1 0 -3.50 0M2611.45 1244.80a1.75 1.75 0 1 0 3.50 0a1.75 1.75 0 1 0 -3.50 0M2619.00 1244.80a1.75 1.75 0 1 0 3.50 0a1.75 1.75 0 1 0 -3.50 0M2626.55 1244.80a1.75 1.75 0 1 0 3.50 0a1.75 1.75 0 1 0 -3.50 0M2634.10 1244.80a1.75 1.75 0 1 0 3.50 0a1.75 1.75 0 1 0 -3.50 0M2641.65 1244.80a1.75 1.75 0 1 0 3.50 0a1.75 1.75 0 1 0 -3.50 0M2649.20 1244.80a1.75 1.75 0 1 0 3.50 0a1.75 1.75 0 1 0 -3.50 0M2656.75 1244.80a1.75 1.75 0 1 0 3.50 0a1.75 1.75 0 1 0 -3.50 0M2664.30 1244.80a1.75 1.75 0 1 0 3.50 0a1.75 1.75 0 1 0 -3.50 0M2671.85 1244.80a1.75 1.75 0 1 0 3.50 0a1.75 1.75 0 1 0 -3.50 0M2679.40 1244.80a1.75 1.75 0 1 0 3.50 0a1.75 1.75 0 1 0 -3.50 0M2686.95 1244.80a1.75 1.75 0 1 0 3.50 0a1.75 1.75 0 1 0 -3.50 0" fill="#1c1e21"/>
<text x="2699.37" y="1233.40" font-family="Liberation Sans" font-size="23.00" font-weight="normal" fill="#1c1e21" textLength="24.93" lengthAdjust="spacingAndGlyphs" >[2]</text>
<text x="2401.14" y="1290.50" font-family="Liberation Sans" font-size="30.60" font-weight="normal" fill="#868686" textLength="281.84" lengthAdjust="spacingAndGlyphs" >Per Messaging Con…</text>
<text x="2974.86" y="1241.70" font-family="Liberation Sans" font-size="35.70" font-weight="normal" fill="#1c1e21" textLength="86.24" lengthAdjust="spacingAndGlyphs" >59.98</text>
<path d="M3065.40 1217.40 Q3067.40 1227.70 3065.70 1236.10" stroke="#1c1e21" stroke-width="2.40" fill="none" stroke-linecap="round"/>
<path d="M3064.30 1244.30 q1.6 -1.2 2.8 -0.2 M3064.70 1242.90 q1.2 0.8 2.2 -0.4" stroke="#1c1e21" stroke-width="0.90" fill="none"/>
<circle cx="3073.10" cy="1240.40" r="1.90" fill="#1c1e21"/>
<path d="M3084.90 1224.70 Q3089.10 1228.20 3089.20 1235.30" stroke="#1c1e21" stroke-width="2.30" fill="none" stroke-linecap="round"/>
<path d="M3080.10 1234.30 Q3080.10 1236.70 3082.10 1236.70 H3089.50 V1234.10 H3081.70 Z" fill="#1c1e21"/>
<circle cx="3085.40" cy="1225.30" r="1.50" fill="#1c1e21"/>
<text x="3210.15" y="1239.80" font-family="Liberation Sans" font-size="30.60" font-weight="normal" fill="#1c1e21" textLength="162.22" lengthAdjust="spacingAndGlyphs" >Jul 10, 2024</text>
<text x="1006.37" y="1356.70" font-family="Liberation Sans" font-size="35.70" font-weight="normal" fill="#1c1e21" textLength="259.59" lengthAdjust="spacingAndGlyphs" >7-day click or 1…</text>
<text x="1575.92" y="1356.70" font-family="Liberation Sans" font-size="35.70" font-weight="normal" fill="#1c1e21" textLength="19.84" lengthAdjust="spacingAndGlyphs" >4</text>
<path d="M1574.24 1359.80a1.75 1.75 0 1 0 3.50 0a1.75 1.75 0 1 0 -3.50 0M1581.79 1359.80a1.75 1.75 0 1 0 3.50 0a1.75 1.75 0 1 0 -3.50 0M1589.34 1359.80a1.75 1.75 0 1 0 3.50 0a1.75 1.75 0 1 0 -3.50 0" fill="#1c1e21"/>
<text x="1604.87" y="1348.40" font-family="Liberation Sans" font-size="23.00" font-weight="normal" fill="#1c1e21" textLength="24.93" lengthAdjust="spacingAndGlyphs" >[2]</text>
<text x="1306.10" y="1405.50" font-family="Liberation Sans" font-size="30.60" font-weight="normal" fill="#868686" textLength="281.77" lengthAdjust="spacingAndGlyphs" >Messaging convers…</text>
<text x="1910.36" y="1356.70" font-family="Liberation Sans" font-size="35.70" font-weight="normal" fill="#1c1e21" textLength="85.44" lengthAdjust="spacingAndGlyphs" >1,437</text>
<text x="2274.37" y="1356.70" font-family="Liberation Sans" font-size="35.70" font-weight="normal" fill="#1c1e21" textLength="84.79" lengthAdjust="spacingAndGlyphs" >1,768</text>
<text x="2574.05" y="1356.70" font-family="Liberation Sans" font-size="35.70" font-weight="normal" fill="#1c1e21" textLength="87.01" lengthAdjust="spacingAndGlyphs" >15.00</text>
<path d="M2665.70 1332.40 Q2667.70 1342.70 2666.00 1351.10" stroke="#1c1e21" stroke-width="2.40" fill="none" stroke-linecap="round"/>
<path d="M2664.60 1359.30 q1.6 -1.2 2.8 -0.2 M2665.00 1357.90 q1.2 0.8 2.2 -0.4" stroke="#1c1e21" stroke-width="0.90" fill="none"/>
<circle cx="2673.40" cy="1355.40" r="1.90" fill="#1c1e21"/>
<path d="M2685.20 1339.70 Q2689.40 1343.20 2689.50 1350.30" stroke="#1c1e21" stroke-width="2.30" fill="none" stroke-linecap="round"/>
<path d="M2680.40 1349.30 Q2680.40 1351.70 2682.40 1351.70 H2689.80 V1349.10 H2682.00 Z" fill="#1c1e21"/>
<circle cx="2685.70" cy="1340.30" r="1.50" fill="#1c1e21"/>
<path d="M2573.70 1359.80a1.75 1.75 0 1 0 3.50 0a1.75 1.75 0 1 0 -3.50 0M2581.25 1359.80a1.75 1.75 0 1 0 3.50 0a1.75 1.75 0 1 0 -3.50 0M2588.80 1359.80a1.75 1.75 0 1 0 3.50 0a1.75 1.75 0 1 0 -3.50 0M2596.35 1359.80a1.75 1.75 0 1 0 3.50 0a1.75 1.75 0 1 0 -3.50 0M2603.90 1359.80a1.75 1.75 0 1 0 3.50 0a1.75 1.75 0 1 0 -3.50 0M2611.45 1359.80a1.75 1.75 0 1 0 3.50 0a1.75 1.75 0 1 0 -3.50 0M2619.00 1359.80a1.75 1.75 0 1 0 3.50 0a1.75 1.75 0 1 0 -3.50 0M2626.55 1359.80a1.75 1.75 0 1 0 3.50 0a1.75 1.75 0 1 0 -3.50 0M2634.10 1359.80a1.75 1.75 0 1 0 3.50 0a1.75 1.75 0 1 0 -3.50 0M2641.65 1359.80a1.75 1.75 0 1 0 3.50 0a1.75 1.75 0 1 0 -3.50 0M2649.20 1359.80a1.75 1.75 0 1 0 3.50 0a1.75 1.75 0 1 0 -3.50 0M2656.75 1359.80a1.75 1.75 0 1 0 3.50 0a1.75 1.75 0 1 0 -3.50 0M2664.30 1359.80a1.75 1.75 0 1 0 3.50 0a1.75 1.75 0 1 0 -3.50 0M2671.85 1359.80a1.75 1.75 0 1 0 3.50 0a1.75 1.75 0 1 0 -3.50 0M2679.40 1359.80a1.75 1.75 0 1 0 3.50 0a1.75 1.75 0 1 0 -3.50 0M2686.95 1359.80a1.75 1.75 0 1 0 3.50 0a1.75 1.75 0 1 0 -3.50 0" fill="#1c1e21"/>
<text x="2699.37" y="1348.40" font-family="Liberation Sans" font-size="23.00" font-weight="normal" fill="#1c1e21" textLength="24.93" lengthAdjust="spacingAndGlyphs" >[2]</text>
<text x="2401.14" y="1405.50" font-family="Liberation Sans" font-size="30.60" font-weight="normal" fill="#868686" textLength="281.84" lengthAdjust="spacingAndGlyphs" >Per Messaging Con…</text>
<text x="2974.12" y="1356.70" font-family="Liberation Sans" font-size="35.70" font-weight="normal" fill="#1c1e21" textLength="86.77" lengthAdjust="spacingAndGlyphs" >60.00</text>
<path d="M3065.40 1332.40 Q3067.40 1342.70 3065.70 1351.10" stroke="#1c1e21" stroke-width="2.40" fill="none" stroke-linecap="round"/>
<path d="M3064.30 1359.30 q1.6 -1.2 2.8 -0.2 M3064.70 1357.90 q1.2 0.8 2.2 -0.4" stroke="#1c1e21" stroke-width="0.90" fill="none"/>
<circle cx="3073.10" cy="1355.40" r="1.90" fill="#1c1e21"/>
<path d="M3084.90 1339.70 Q3089.10 1343.20 3089.20 1350.30" stroke="#1c1e21" stroke-width="2.30" fill="none" stroke-linecap="round"/>
<path d="M3080.10 1349.30 Q3080.10 1351.70 3082.10 1351.70 H3089.50 V1349.10 H3081.70 Z" fill="#1c1e21"/>
<circle cx="3085.40" cy="1340.30" r="1.50" fill="#1c1e21"/>
<text x="3227.01" y="1354.80" font-family="Liberation Sans" font-size="30.60" font-weight="normal" fill="#1c1e21" textLength="145.36" lengthAdjust="spacingAndGlyphs" >Jul 5, 2024</text>
<rect x="0.00" y="384.00" width="1062.00" height="121.00" rx="0" fill="#ffffff" />
<rect x="0.00" y="505.00" width="1062.00" height="115.00" rx="0" fill="#ffffff" />
<rect x="0.00" y="620.00" width="1062.00" height="115.00" rx="0" fill="#f5f6f7" />
<rect x="0.00" y="735.00" width="1062.00" height="115.00" rx="0" fill="#e4e4e4" />
<rect x="0.00" y="850.00" width="1062.00" height="115.00" rx="0" fill="#f5f6f7" />
<rect x="0.00" y="965.00" width="1062.00" height="115.00" rx="0" fill="#ffffff" />
<rect x="0.00" y="1080.00" width="1062.00" height="115.00" rx="0" fill="#f5f6f7" />
<rect x="0.00" y="1195.00" width="1062.00" height="115.00" rx="0" fill="#ffffff" />
<rect x="0.00" y="1310.00" width="1062.00" height="115.00" rx="0" fill="#f5f6f7" />
<rect x="-45" y="416" width="58.4" height="58.5" rx="12" fill="#fff" stroke="#d2d2d2" stroke-width="2.2"/>
<text x="71.62" y="454.50" font-family="Liberation Sans" font-size="35.70" font-weight="bold" fill="#1c1e21" textLength="123.72" lengthAdjust="spacingAndGlyphs" >Off / On</text>
<text x="286.95" y="454.50" font-family="Liberation Sans" font-size="35.70" font-weight="bold" fill="#1c1e21" textLength="159.43" lengthAdjust="spacingAndGlyphs" >Campaign</text>
<path d="M1022.65 441.65 H1037.35 L1030.00 448.67 Z" fill="#000" stroke="#000" stroke-width="3.30" stroke-linejoin="round"/>
<rect x="-45" y="534.00" width="58.4" height="58.5" rx="12" fill="#fff" stroke="#d2d2d2" stroke-width="2.2"/>
<rect x="107.45" y="537.45" width="90.60" height="50.85" rx="25.43" fill="#fff" stroke="#d2d2d2" stroke-width="2.2"/>
<circle cx="133" cy="563.00" r="20" fill="#444444"/>
<text x="271.97" y="573.75" font-family="Liberation Sans" font-size="35.70" font-weight="normal" fill="#1763cf" textLength="574.95" lengthAdjust="spacingAndGlyphs" >July Updated Engagement Campaign</text>
<rect x="-45" y="649.00" width="58.4" height="58.5" rx="12" fill="#fff" stroke="#d2d2d2" stroke-width="2.2"/>
<rect x="107.45" y="652.45" width="90.60" height="50.85" rx="25.43" fill="#fff" stroke="#d2d2d2" stroke-width="2.2"/>
<circle cx="133" cy="678.00" r="20" fill="#444444"/>
<text x="271.97" y="688.75" font-family="Liberation Sans" font-size="35.70" font-weight="normal" fill="#1763cf" textLength="448.22" lengthAdjust="spacingAndGlyphs" >June Engagement Campaign</text>
<rect x="-45" y="764.00" width="58.4" height="58.5" rx="12" fill="#fff" stroke="#d2d2d2" stroke-width="2.2"/>
<rect x="107.45" y="767.45" width="90.60" height="50.85" rx="25.43" fill="#fff" stroke="#d2d2d2" stroke-width="2.2"/>
<circle cx="133" cy="793.00" r="20" fill="#444444"/>
<rect x="-45" y="879.00" width="58.4" height="58.5" rx="12" fill="#fff" stroke="#d2d2d2" stroke-width="2.2"/>
<rect x="107.45" y="882.45" width="90.60" height="50.85" rx="25.43" fill="#fff" stroke="#d2d2d2" stroke-width="2.2"/>
<circle cx="133" cy="908.00" r="20" fill="#444444"/>
<text x="271.32" y="918.75" font-family="Liberation Sans" font-size="35.70" font-weight="normal" fill="#1763cf" textLength="575.60" lengthAdjust="spacingAndGlyphs" >Updated July Engagement Campaign</text>
<rect x="-45" y="994.00" width="58.4" height="58.5" rx="12" fill="#fff" stroke="#d2d2d2" stroke-width="2.2"/>
<rect x="107.45" y="997.45" width="90.60" height="50.85" rx="25.43" fill="#fff" stroke="#d2d2d2" stroke-width="2.2"/>
<circle cx="133" cy="1023.00" r="20" fill="#444444"/>
<text x="271.65" y="1033.75" font-family="Liberation Sans" font-size="35.70" font-weight="normal" fill="#1763cf" textLength="438.19" lengthAdjust="spacingAndGlyphs" >May Engagement Campaign</text>
<rect x="-45" y="1109.00" width="58.4" height="58.5" rx="12" fill="#fff" stroke="#d2d2d2" stroke-width="2.2"/>
<rect x="107.45" y="1112.45" width="90.60" height="50.85" rx="25.43" fill="#fff" stroke="#d2d2d2" stroke-width="2.2"/>
<circle cx="133" cy="1138.00" r="20" fill="#444444"/>
<text x="271.46" y="1148.75" font-family="Liberation Sans" font-size="35.70" font-weight="normal" fill="#1763cf" textLength="238.07" lengthAdjust="spacingAndGlyphs" >Instagram Post</text>
<rect x="-45" y="1224.00" width="58.4" height="58.5" rx="12" fill="#fff" stroke="#d2d2d2" stroke-width="2.2"/>
<rect x="107.45" y="1227.45" width="90.60" height="50.85" rx="25.43" fill="#fff" stroke="#d2d2d2" stroke-width="2.2"/>
<circle cx="133" cy="1253.00" r="20" fill="#444444"/>
<rect x="-45" y="1339.00" width="58.4" height="58.5" rx="12" fill="#fff" stroke="#d2d2d2" stroke-width="2.2"/>
<rect x="107.45" y="1342.45" width="90.60" height="50.85" rx="25.43" fill="#fff" stroke="#d2d2d2" stroke-width="2.2"/>
<circle cx="133" cy="1368.00" r="20" fill="#444444"/>
<text x="271.32" y="803.75" font-family="Liberation Sans" font-size="35.70" font-weight="normal" fill="#1763cf" textLength="298.40" lengthAdjust="spacingAndGlyphs" >Updated Campaign</text>
<circle cx="583.5" cy="802.15" r="1.9" fill="#1c1e21"/>
<circle cx="590" cy="802.15" r="1.9" fill="#1c1e21"/>
<circle cx="596.5" cy="802.15" r="1.9" fill="#1c1e21"/>
<g transform="translate(655.00,765.00)" >
<path d="M10.2 46.3 V39.8 Q10.2 38.6 11 37.8 L36.3 12.5 Q37.3 11.5 38.3 12.5 L45 19.2 Q46 20.2 45 21.2 L19.7 45.5 Q18.9 46.3 17.7 46.3 Z M31 18.3 L38.4 25.7" fill="none" stroke="#1c1c1c" stroke-width="2.5" stroke-linejoin="round"/>
<path d="M120.2 16 L112.5 17.3 Q109 18 109.6 21.5 L114.6 46 Q115.3 49 118.8 48.4 L132 46.2 Q134.5 45.7 135.6 43.6" fill="none" stroke="#1c1c1c" stroke-width="2.5" stroke-linejoin="round"/>
<path d="M122.3 15.3 Q122.3 12 125.6 12 H134.8 L143.9 21.2 V38.6 Q143.9 41.8 140.6 41.8 H125.6 Q122.3 41.8 122.3 38.6 Z M134.5 12.2 V18.4 Q134.5 21 137 21 H143.8" fill="none" stroke="#1c1c1c" stroke-width="2.5" stroke-linejoin="round"/>
</g>
<g transform="translate(855.00,765.00)" >
<g fill="none" stroke="#1c1c1c" stroke-width="2.5"><rect x="10.15" y="35.65" width="4.2" height="10.1" rx="1.3"/><rect x="20.05" y="22.25" width="4.6" height="23.5" rx="1.3"/><rect x="30.05" y="27.25" width="4.5" height="18.5" rx="1.3"/><rect x="40.25" y="13.85" width="4.6" height="31.9" rx="1.3"/></g>
<circle cx="124.5" cy="29.8" r="4" fill="#222"/>
<circle cx="137" cy="29.8" r="4" fill="#222"/>
<circle cx="149.4" cy="29.8" r="4" fill="#222"/>
</g>
<text x="269.47" y="1263.60" font-family="Liberation Sans" font-size="35.70" font-weight="normal" fill="#1763cf" textLength="682.56" lengthAdjust="spacingAndGlyphs" >...- Grand Egg Vase Arrangement :Instagram</text>
<g transform="translate(950.00,1225.00)" >
<g fill="none" stroke="#1763cf" stroke-width="2.6" stroke-linecap="round" stroke-linejoin="round"><path d="M38.8 32.6 H80.6 L77.8 25.9 Q77 24.6 75.6 25.6 Q72.4 28.2 71 32.4"/><path d="M66.3 24.2 V32.4 M58.0 25.2 V32.4 M54.3 25.6 V32.4 M46.2 25.6 V32.4"/><path d="M39.6 32.6 Q39.6 25.6 37.2 25.5 Q34.6 25.4 34.8 29 Q35 32.6 39.4 32.8 Q38.6 38.4 32.4 39.6 Q29 40 26.4 38.8"/><path d="M22.8 25.4 Q25.6 30.4 23.8 34.4 Q20.6 39.8 14.6 40 Q12 40 10.2 38.8"/></g>
<g fill="#1763cf"><rect x="62.7" y="17" width="3.4" height="3.4" transform="rotate(45 64.4 18.7)"/><rect x="50.7" y="13.8" width="3.4" height="3.4" transform="rotate(45 52.4 15.5)"/><rect x="54.1" y="17" width="3.4" height="3.4" transform="rotate(45 55.8 18.7)"/><rect x="49.8" y="19.3" width="3.4" height="3.4" transform="rotate(45 51.5 21)"/></g>
</g>
<circle cx="274.6" cy="1376.40" r="2.3" fill="#1763cf"/>
<circle cx="284.2" cy="1376.40" r="2.3" fill="#1763cf"/>
<circle cx="293.8" cy="1376.40" r="2.3" fill="#1763cf"/>
<text x="300.27" y="1378.60" font-family="Liberation Serif" font-size="35.00" font-weight="bold" fill="#1763cf" textLength="246.13" lengthAdjust="spacingAndGlyphs" >Pre-Order Now</text>
<g transform="translate(559.90,1352.30)" >
<path d="M6.9 14 V26.5 Q7.2 28.6 9.5 28.6 L19.5 28.9 L32.8 22.6 V14 Z" fill="#3c3c3c" stroke="#000" stroke-width="2.6" stroke-linejoin="round"/><path d="M1 10.7 L19.5 0.6 L38.8 10.7 L19.5 19.8 Z" fill="#777" stroke="#000" stroke-width="2.8" stroke-linejoin="round"/><path d="M19.5 10.9 L11.1 15 V23.4" fill="none" stroke="#f0a30a" stroke-width="1.7"/><circle cx="11.1" cy="24.6" r="1.9" fill="#f0a30a"/>
</g>
<text x="612.04" y="1378.60" font-family="Liberation Sans" font-size="35.70" font-weight="normal" fill="#1763cf" textLength="400.75" lengthAdjust="spacingAndGlyphs" >Celebrate your :Instagram</text>
<circle cx="1023" cy="1377.00" r="1.9" fill="#1c1e21"/>
<circle cx="1031" cy="1377.00" r="1.9" fill="#1c1e21"/>
<circle cx="1039" cy="1377.00" r="1.9" fill="#1c1e21"/>
<rect x="0.00" y="382.90" width="3394.00" height="2.2" fill="#cfcfcf"/>
<rect x="0.00" y="502.90" width="3394.00" height="2.2" fill="#cfcfcf"/>
<rect x="45.00" y="384.00" width="2" height="1034.00" fill="#d8d9dd"/>
<rect x="260.00" y="384.00" width="2" height="1186.00" fill="#d8d9dd"/>
<rect x="1285.00" y="384.00" width="2" height="1186.00" fill="#d8d9dd"/>
<rect x="1650.00" y="384.00" width="2" height="1186.00" fill="#d8d9dd"/>
<rect x="2015.00" y="384.00" width="2" height="1186.00" fill="#d8d9dd"/>
<rect x="2380.00" y="384.00" width="2" height="1186.00" fill="#d8d9dd"/>
<rect x="2745.00" y="384.00" width="2" height="1186.00" fill="#d8d9dd"/>
<rect x="3110.00" y="384.00" width="2" height="1186.00" fill="#d8d9dd"/>
<rect x="3391.50" y="384.00" width="2" height="1186.00" fill="#d8d9dd"/>
<rect x="1063.6" y="384" width="10.5" height="1186" fill="url(#frz)"/>
<rect x="1062.00" y="384.00" width="1.6" height="1186.00" fill="#d3d3d6"/>
<rect x="0" y="1406" width="3394" height="11.5" fill="url(#fts)"/>
<rect x="0.00" y="1418.00" width="3394.00" height="152.00" rx="0" fill="#ffffff" />
<text x="1011.00" y="1472.00" font-family="Liberation Sans" font-size="35.70" font-weight="bold" fill="#1c1e21" textLength="250.20" lengthAdjust="spacingAndGlyphs" >7-day click or …</text>
<rect x="1610.30" y="1458.40" width="23.70" height="3.80" rx="0.8" fill="#606770" />
<text x="1358.91" y="1519.80" font-family="Liberation Sans" font-size="30.60" font-weight="normal" fill="#868686" textLength="276.20" lengthAdjust="spacingAndGlyphs" >Multiple conversions</text>
<text x="1891.63" y="1471.70" font-family="Liberation Sans" font-size="35.70" font-weight="bold" fill="#1c1e21" textLength="107.56" lengthAdjust="spacingAndGlyphs" >15,814</text>
<path d="M1890.85 1474.80a1.75 1.75 0 1 0 3.50 0a1.75 1.75 0 1 0 -3.50 0M1898.40 1474.80a1.75 1.75 0 1 0 3.50 0a1.75 1.75 0 1 0 -3.50 0M1905.95 1474.80a1.75 1.75 0 1 0 3.50 0a1.75 1.75 0 1 0 -3.50 0M1913.50 1474.80a1.75 1.75 0 1 0 3.50 0a1.75 1.75 0 1 0 -3.50 0M1921.05 1474.80a1.75 1.75 0 1 0 3.50 0a1.75 1.75 0 1 0 -3.50 0M1928.60 1474.80a1.75 1.75 0 1 0 3.50 0a1.75 1.75 0 1 0 -3.50 0M1936.15 1474.80a1.75 1.75 0 1 0 3.50 0a1.75 1.75 0 1 0 -3.50 0M1943.70 1474.80a1.75 1.75 0 1 0 3.50 0a1.75 1.75 0 1 0 -3.50 0M1951.25 1474.80a1.75 1.75 0 1 0 3.50 0a1.75 1.75 0 1 0 -3.50 0M1958.80 1474.80a1.75 1.75 0 1 0 3.50 0a1.75 1.75 0 1 0 -3.50 0M1966.35 1474.80a1.75 1.75 0 1 0 3.50 0a1.75 1.75 0 1 0 -3.50 0M1973.90 1474.80a1.75 1.75 0 1 0 3.50 0a1.75 1.75 0 1 0 -3.50 0M1981.45 1474.80a1.75 1.75 0 1 0 3.50 0a1.75 1.75 0 1 0 -3.50 0M1989.00 1474.80a1.75 1.75 0 1 0 3.50 0a1.75 1.75 0 1 0 -3.50 0M1996.55 1474.80a1.75 1.75 0 1 0 3.50 0a1.75 1.75 0 1 0 -3.50 0" fill="#1c1e21"/>
<text x="1678.14" y="1519.10" font-family="Liberation Sans" font-size="30.60" font-weight="normal" fill="#868686" textLength="315.72" lengthAdjust="spacingAndGlyphs" >Accounts Center acco…</text>
<text x="2256.55" y="1472.00" font-family="Liberation Sans" font-size="35.70" font-weight="bold" fill="#1c1e21" textLength="108.78" lengthAdjust="spacingAndGlyphs" >32,772</text>
<text x="2297.79" y="1519.50" font-family="Liberation Sans" font-size="30.60" font-weight="normal" fill="#868686" textLength="68.16" lengthAdjust="spacingAndGlyphs" >Total</text>
<rect x="2704.90" y="1458.40" width="24.10" height="3.80" rx="0.8" fill="#606770" />
<text x="2453.91" y="1519.80" font-family="Liberation Sans" font-size="30.60" font-weight="normal" fill="#868686" textLength="276.20" lengthAdjust="spacingAndGlyphs" >Multiple conversions</text>
<text x="2927.23" y="1472.00" font-family="Liberation Sans" font-size="35.70" font-weight="bold" fill="#1c1e21" textLength="138.70" lengthAdjust="spacingAndGlyphs" >1,973.62</text>
<path d="M3069.40 1447.70 Q3071.40 1458.00 3069.70 1466.40" stroke="#1c1e21" stroke-width="3.12" fill="none" stroke-linecap="round"/>
<path d="M3068.30 1474.60 q1.6 -1.2 2.8 -0.2 M3068.70 1473.20 q1.2 0.8 2.2 -0.4" stroke="#1c1e21" stroke-width="0.90" fill="none"/>
<circle cx="3077.10" cy="1470.70" r="2.47" fill="#1c1e21"/>
<path d="M3088.90 1455.00 Q3093.10 1458.50 3093.20 1465.60" stroke="#1c1e21" stroke-width="2.99" fill="none" stroke-linecap="round"/>
<path d="M3084.10 1464.60 Q3084.10 1467.00 3086.10 1467.00 H3093.50 V1464.40 H3085.70 Z" fill="#1c1e21"/>
<circle cx="3089.40" cy="1455.60" r="1.95" fill="#1c1e21"/>
<text x="2945.20" y="1519.50" font-family="Liberation Sans" font-size="30.60" font-weight="normal" fill="#868686" textLength="149.63" lengthAdjust="spacingAndGlyphs" >Total spent</text>
<rect x="0.00" y="1418.00" width="1062.00" height="152.00" rx="0" fill="#ffffff" />
<text x="289.98" y="1472.00" font-family="Liberation Sans" font-size="35.70" font-weight="bold" fill="#1c1e21" textLength="432.48" lengthAdjust="spacingAndGlyphs" >Results from 63 campaigns</text>
<circle cx="748.2" cy="1459.4" r="14.9" fill="#444"/>
<circle cx="748.2" cy="1452" r="2.4" fill="#fff"/><rect x="746.1" y="1456" width="4.2" height="11.5" rx="1" fill="#fff"/>
<text x="289.75" y="1520.40" font-family="Liberation Sans" font-size="30.60" font-weight="normal" fill="#868686" textLength="307.73" lengthAdjust="spacingAndGlyphs" >Excludes deleted items</text>
<rect x="0.00" y="1417.40" width="3394.00" height="2.2" fill="#e4e6e8"/>
<rect x="260.00" y="1418.00" width="2" height="152.00" fill="#d8d9dd"/>
<rect x="1285.00" y="1418.00" width="2" height="152.00" fill="#d8d9dd"/>
<rect x="1650.00" y="1418.00" width="2" height="152.00" fill="#d8d9dd"/>
<rect x="2015.00" y="1418.00" width="2" height="152.00" fill="#d8d9dd"/>
<rect x="2380.00" y="1418.00" width="2" height="152.00" fill="#d8d9dd"/>
<rect x="2745.00" y="1418.00" width="2" height="152.00" fill="#d8d9dd"/>
<rect x="3110.00" y="1418.00" width="2" height="152.00" fill="#d8d9dd"/>
<rect x="3391.50" y="1418.00" width="2" height="152.00" fill="#d8d9dd"/>
<rect x="1063.6" y="1418" width="10.5" height="152" fill="url(#frz)"/>
<rect x="1062.00" y="1418.00" width="1.6" height="152.00" fill="#d3d3d6"/>
</svg>
</body></html>
